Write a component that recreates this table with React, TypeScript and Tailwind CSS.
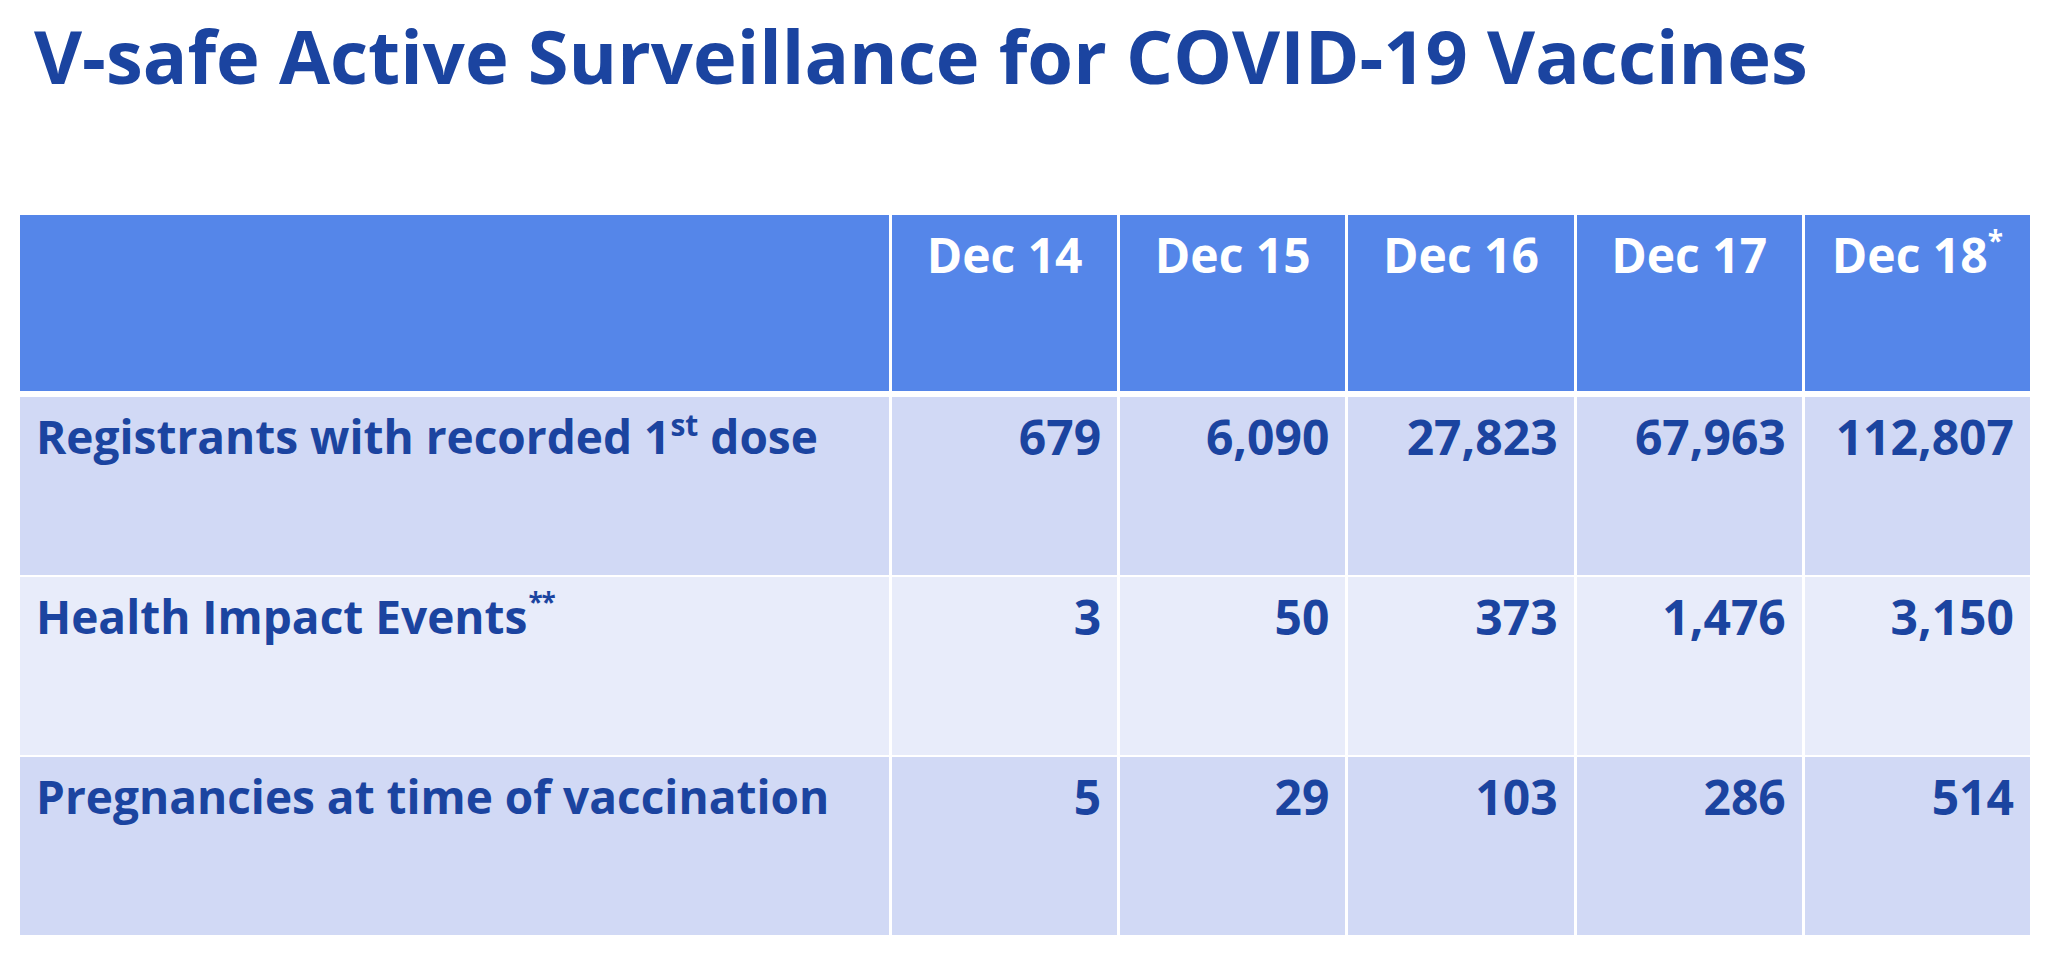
import React from "react";

const cols = "grid grid-cols-[869px_repeat(5,minmax(0,1fr))] gap-x-[3px]";

type Row = { label: React.ReactNode; values: string[]; bg: string };

const rows: Row[] = [
  {
    label: (
      <>
        Registrants with recorded 1
        <sup className="text-[30px] top-[-0.6em]">st</sup> dose
      </>
    ),
    values: ["679", "6,090", "27,823", "67,963", "112,807"],
    bg: "bg-[#D1D9F5]",
  },
  {
    label: (
      <>
        Health Impact Events
        <sup className="text-[26px] top-[-0.85em] tracking-[-1px] ml-[1px]">**</sup>
      </>
    ),
    values: ["3", "50", "373", "1,476", "3,150"],
    bg: "bg-[#E8ECFA]",
  },
  {
    label: <>Pregnancies at time of vaccination</>,
    values: ["5", "29", "103", "286", "514"],
    bg: "bg-[#D1D9F5]",
  },
];

const headers: React.ReactNode[] = [
  "Dec 14",
  "Dec 15",
  "Dec 16",
  "Dec 17",
  <>
    Dec 18<sup className="text-[28px] top-[-0.8em]">*</sup>
  </>,
];

export default function App() {
  return (
    <div className="w-[2048px] h-[953px] bg-white overflow-hidden font-['Open_Sans','Lato',sans-serif]">
      <h1 className="pt-[19px] pl-[34px] text-[74px] leading-none font-bold text-[#1B44A0] whitespace-nowrap">
        V-safe Active Surveillance for COVID-19 Vaccines
      </h1>
      <div className="ml-[20px] mt-[122px] w-[2010px] flex flex-col">
        <div className={`${cols} h-[176px]`}>
          <div className="bg-[#5586E9]" />
          {headers.map((h, i) => (
            <div
              key={i}
              className="bg-[#5586E9] pt-[16px] text-center text-white font-bold text-[48px] leading-none whitespace-nowrap"
            >
              {h}
            </div>
          ))}
        </div>
        {rows.map((r, ri) => (
          <div
            key={ri}
            className={`${cols} h-[178px] ${ri === 0 ? "mt-[6px]" : "mt-[2px]"}`}
          >
            <div
              className={`${r.bg} pt-[16px] pl-[16px] text-[46px] leading-none font-bold text-[#1B44A0] whitespace-nowrap`}
            >
              {r.label}
            </div>
            {r.values.map((v, vi) => (
              <div
                key={vi}
                className={`${r.bg} pt-[16px] pr-[16px] text-right text-[48px] leading-none font-bold text-[#1B44A0] whitespace-nowrap`}
              >
                {v}
              </div>
            ))}
          </div>
        ))}
      </div>
    </div>
  );
}
